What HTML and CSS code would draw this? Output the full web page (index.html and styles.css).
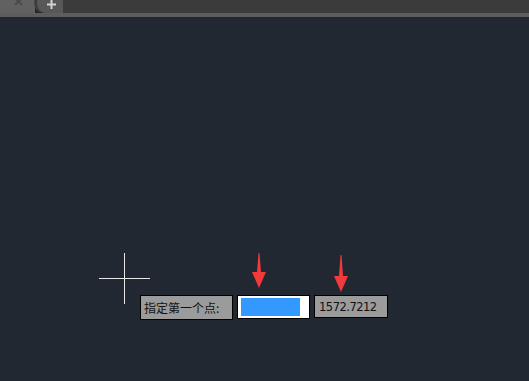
FILE: index.html
```html
<!DOCTYPE html>
<html>
<head>
<meta charset="utf-8">
<link rel="stylesheet" href="styles.css">
</head>
<body>
<div class="app">
  <div class="tabbar">
    <div class="tabs">
      <div class="tab-closed">
        <svg class="icon-x" width="9" height="7" viewBox="0 0 9 7">
          <path d="M1,-2 L8,5 M8,-2 L1,5" stroke="#4a4a4a" stroke-width="2"/>
        </svg>
      </div>
      <div class="tab-new">
        <svg class="icon-plus" width="11" height="10" viewBox="0 0 11 10">
          <path d="M5.5,0 V9 M1,4.5 H10" stroke="#d4d4d4" stroke-width="2"/>
        </svg>
      </div>
      <div class="tab-rest"></div>
    </div>
    <div class="strip"></div>
  </div>
  <div class="canvas">
    <div class="cross">
      <div class="cross-h"></div>
      <div class="cross-v"></div>
    </div>
    <svg class="arrow arrow-1" width="16" height="36" viewBox="0 0 16 36">
      <polygon points="7.5,0 8.5,0 10,19 15,19 8,35 1,19 6,19" fill="#f23a3a"/>
    </svg>
    <svg class="arrow arrow-2" width="16" height="38" viewBox="0 0 16 38">
      <polygon points="7.5,0 8.5,0 10,21 15,21 8,37 1,21 6,21" fill="#f23a3a"/>
    </svg>
    <div class="prompt">
      <div class="box label">指定第一个点:</div>
      <div class="box input"><div class="sel"></div></div>
      <div class="box value">1572.7212</div>
    </div>
  </div>
</div>
</body>
</html>
```
FILE: styles.css
```css
html, body {
  margin: 0;
  padding: 0;
}
body {
  width: 529px;
  height: 381px;
  overflow: hidden;
  background: #212831;
  font-family: "Liberation Sans", "Noto Sans CJK SC", sans-serif;
}
.app {
  display: flex;
  flex-direction: column;
  height: 381px;
}
.tabbar {
  display: flex;
  flex-direction: column;
}
.tabs {
  display: flex;
  height: 13px;
}
.tab-closed {
  width: 35px;
  background: #616161;
  display: flex;
  justify-content: center;
  align-items: flex-start;
}
.icon-x {
  display: block;
  margin-left: 1px;
}
.tab-new {
  width: 28px;
  background: #585858;
  border-left: 2px solid #3a3a3a;
  border-bottom-left-radius: 10px;
  box-shadow: -1px 0 0 #4a4a4a;
  display: flex;
  justify-content: center;
  align-items: flex-start;
  box-sizing: border-box;
}
.icon-plus {
  display: block;
  margin-left: 2px;
}
.tab-rest {
  flex: 1;
  background: #3b3b3b;
}
.strip {
  height: 4px;
  background: #5d5d5d;
}
.canvas {
  flex: 1;
  position: relative;
  background: #212831;
}
.cross {
  position: absolute;
  left: 99px;
  top: 236px;
  width: 51px;
  height: 51px;
}
.cross-h {
  position: absolute;
  left: 0;
  top: 25px;
  width: 51px;
  height: 1px;
  background: #e8e8e8;
}
.cross-v {
  position: absolute;
  left: 25px;
  top: 0;
  width: 1px;
  height: 51px;
  background: #e8e8e8;
}
.arrow {
  position: absolute;
}
.arrow-1 {
  left: 251px;
  top: 236px;
}
.arrow-2 {
  left: 333px;
  top: 238px;
}
.prompt {
  position: absolute;
  left: 140px;
  top: 278px;
  display: flex;
  align-items: flex-start;
  gap: 4px;
}
.box {
  box-sizing: border-box;
  border: 1px solid #000;
  font-size: 12px;
  color: #111;
  display: flex;
  align-items: center;
}
.label {
  width: 93px;
  height: 25px;
  background: #9b9b9b;
  padding-left: 3px;
  font-family: "Noto Sans CJK SC", sans-serif;
}
.input {
  width: 73px;
  height: 24px;
  background: #fff;
  padding: 1px 9px 2px 3px;
}
.sel {
  width: 59px;
  height: 18px;
  background: #3399ff;
}
.value {
  width: 74px;
  height: 23px;
  background: #9b9b9b;
  padding-left: 4px;
  font-family: "DejaVu Sans", sans-serif;
  font-size: 11.5px;
  letter-spacing: -0.5px;
}
```
